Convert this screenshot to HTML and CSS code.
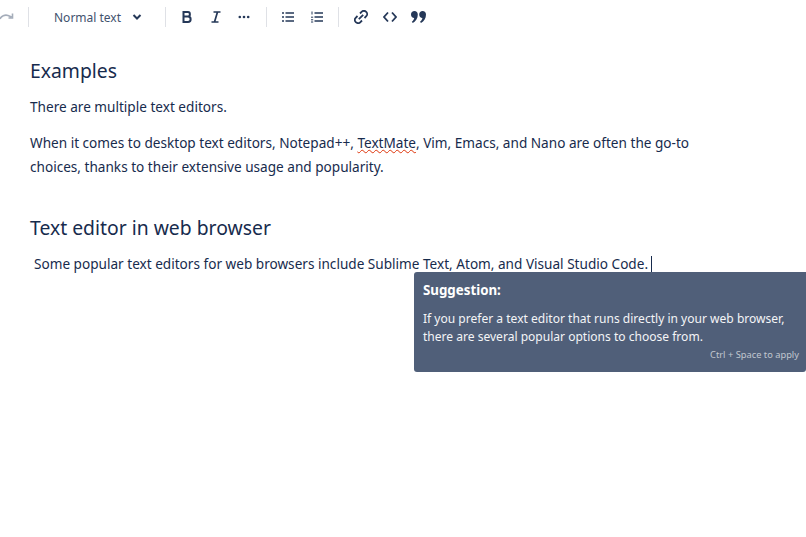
FILE: index.html
```html
<!DOCTYPE html>
<html lang="en">
<head>
<meta charset="utf-8">
<title>Editor</title>
<link rel="stylesheet" href="styles.css">
</head>
<body>
<div class="toolbar">
  <span class="btn redo"><svg width="14" height="14" viewBox="0 0 14 14"><path d="M0 9C1 6 5 4.500 8 5.500L11.500 7M12.500 3.500V8H8.500" fill="none" stroke="#a5adba" stroke-width="1.600"/></svg></span>
  <span class="sep sep-first"></span>
  <span class="select">Normal text<svg class="chev" width="10" height="8" viewBox="0 0 10 8"><path d="M1.500 2L5 5.500L8.500 2" fill="none" stroke="#253858" stroke-width="2"/></svg></span>
  <span class="sep sep-format"></span>
  <span class="btn bold"><svg width="12" height="14" viewBox="0 0 12 14"><path d="M2.500 2H7C9.500 2 9.500 6.500 7 6.500C10.500 6.500 10.500 12 7 12H2.500ZM2.500 6.500H7" fill="none" stroke="#253858" stroke-width="2"/></svg></span>
  <span class="btn italic"><svg width="12" height="14" viewBox="0 0 12 14"><path d="M3.500 2H10.500M1.500 12H8.500M7.500 2L4.500 12" fill="none" stroke="#253858" stroke-width="1.700"/></svg></span>
  <span class="btn more"><svg width="12" height="4" viewBox="0 0 12 4"><circle cx="1.800" cy="2" r="1.300"/><circle cx="6" cy="2" r="1.300"/><circle cx="10.200" cy="2" r="1.300"/></svg></span>
  <span class="sep sep-list"></span>
  <span class="btn bullets"><svg width="12" height="12" viewBox="0 0 12 12"><path d="M3.500 2H12M3.500 6H12M3.500 10H12" stroke="#253858" stroke-width="1.500"/><path d="M0 2H2M0 6H2M0 10H2" stroke="#253858" stroke-width="1.700"/></svg></span>
  <span class="btn numbers"><svg width="12" height="12" viewBox="0 0 12 12"><path d="M3.500 2H12M3.500 6H12M3.500 10H12" stroke="#253858" stroke-width="1.500"/><path d="M1 .5V3.500M0 6.200H2.200M0 8.800H2.200M0 11H2.200" stroke="#253858" stroke-width="1"/></svg></span>
  <span class="sep sep-insert"></span>
  <span class="btn link"><svg width="14" height="14" viewBox="0 0 14 14"><path d="M6 3.500L7.800 1.700C9 .5 11 .7 12.200 1.800C13.400 3 13.500 5 12.300 6.200L10.500 8M8 10.500L6.200 12.300C5 13.500 3 13.400 1.800 12.200C.7 11 .5 9 1.700 7.800L3.500 6M4.800 9.200L9.200 4.800" fill="none" stroke="#253858" stroke-width="1.800"/></svg></span>
  <span class="btn code"><svg width="14" height="12" viewBox="0 0 14 12"><path d="M5 1.500L1 6L5 10.500M9 1.500L13 6L9 10.500" fill="none" stroke="#253858" stroke-width="1.800"/></svg></span>
  <span class="btn quote"><svg width="15" height="12" viewBox="0 0 15 12"><path d="M3.400 0C5.400 0 6.800 1.400 6.800 3.500C6.800 7.300 4.800 10.400 1.800 12L.8 10.800C2.200 9.800 3 8.500 3.200 7C1.400 7 0 5.500 0 3.500C0 1.500 1.500 0 3.400 0ZM11.600 0C13.600 0 15 1.400 15 3.500C15 7.300 13 10.400 10 12L9 10.800C10.400 9.800 11.200 8.500 11.400 7C9.600 7 8.200 5.500 8.200 3.500C8.200 1.500 9.700 0 11.600 0Z" fill="#253858"/></svg></span>
</div>
<main class="content">
  <h2 class="heading">Examples</h2>
  <p class="para">There are multiple text editors.</p>
  <p class="para">When it comes to desktop text editors, Notepad++, <span class="misspelt">TextMate</span>, Vim, Emacs, and Nano are often the go-to choices, thanks to their extensive usage and popularity.</p>
  <h2 class="heading heading-second">Text editor in web browser</h2>
  <p class="para para-indented">Some popular text editors for web browsers include Sublime Text, Atom, and Visual Studio Code.<span class="caret"></span></p>
</main>
<aside class="tip">
  <div class="tip-title">Suggestion:</div>
  <p class="tip-body">If you prefer a text editor that runs directly in your web browser, there are several popular options to choose from.</p>
  <div class="tip-hint">Ctrl + Space to apply</div>
</aside>
</body>
</html>
```
FILE: styles.css
```css
* { box-sizing: border-box; }
html, body { margin: 0; padding: 0; height: 100%; overflow: hidden; }
body {
  position: relative;
  background: #fff;
  color: #172b4d;
  font-family: "Noto Sans", sans-serif;
  font-size: 14px;
}
.toolbar {
  display: flex;
  align-items: center;
  height: 34px;
}
.btn { display: flex; align-items: center; justify-content: center; flex: none; }
.btn svg { display: block; }
.more svg { fill: #253858; }
.redo { width: 14px; }
.sep { width: 1px; height: 20px; background: #dfe1e6; flex: none; }
.sep-first { margin-left: 14px; }
.select {
  display: flex;
  align-items: center;
  margin-left: 25px;
  width: 111px;
  font-size: 12px;
  color: #42526e;
}
.chev { margin-left: 11px; }
.bold { margin-left: 15px; width: 12px; }
.italic { margin-left: 17px; width: 12px; }
.more { margin-left: 16px; width: 12px; }
.sep-list { margin-left: 16px; }
.bullets { margin-left: 15px; width: 12px; }
.numbers { margin-left: 17px; width: 12px; }
.sep-insert { margin-left: 15px; }
.link { margin-left: 15px; width: 14px; }
.code { margin-left: 15px; width: 14px; }
.quote { margin-left: 14px; width: 15px; }
.content { padding: 23px 0 0 30px; width: 700px; }
.heading {
  margin: 0;
  font-size: 19.350px;
  font-weight: 400;
  line-height: 28px;
  color: #172b4d;
}
.heading-second { margin-top: 35px; }
.para { margin: 10px 0 0; line-height: 24px; font-size: 13.600px; }
.para + .para { margin-top: 12px; }
.para-indented { margin-left: 4px; white-space: nowrap; }
.misspelt { text-decoration: underline wavy #de350b 1.200px; text-underline-offset: 1px; }
.caret { display: inline-block; width: 1px; height: 17px; background: #172b4d; margin-left: 3px; vertical-align: -4px; }
.tip {
  position: absolute;
  left: 414px;
  top: 272px;
  width: 392px;
  height: 100px;
  padding: 9px 7px 0 9px;
  background: #505f79;
  border-radius: 3px 0 3px 3px;
  color: #fff;
}
.tip-title { font-size: 13.300px; font-weight: 700; line-height: 19px; }
.tip-body { margin: 10px 0 0; font-size: 12.050px; line-height: 18px; color: #f4f5f7; }
.tip-hint { margin-top: 2px; font-size: 9.300px; line-height: 14px; text-align: right; color: #c1c7d0; }
```
